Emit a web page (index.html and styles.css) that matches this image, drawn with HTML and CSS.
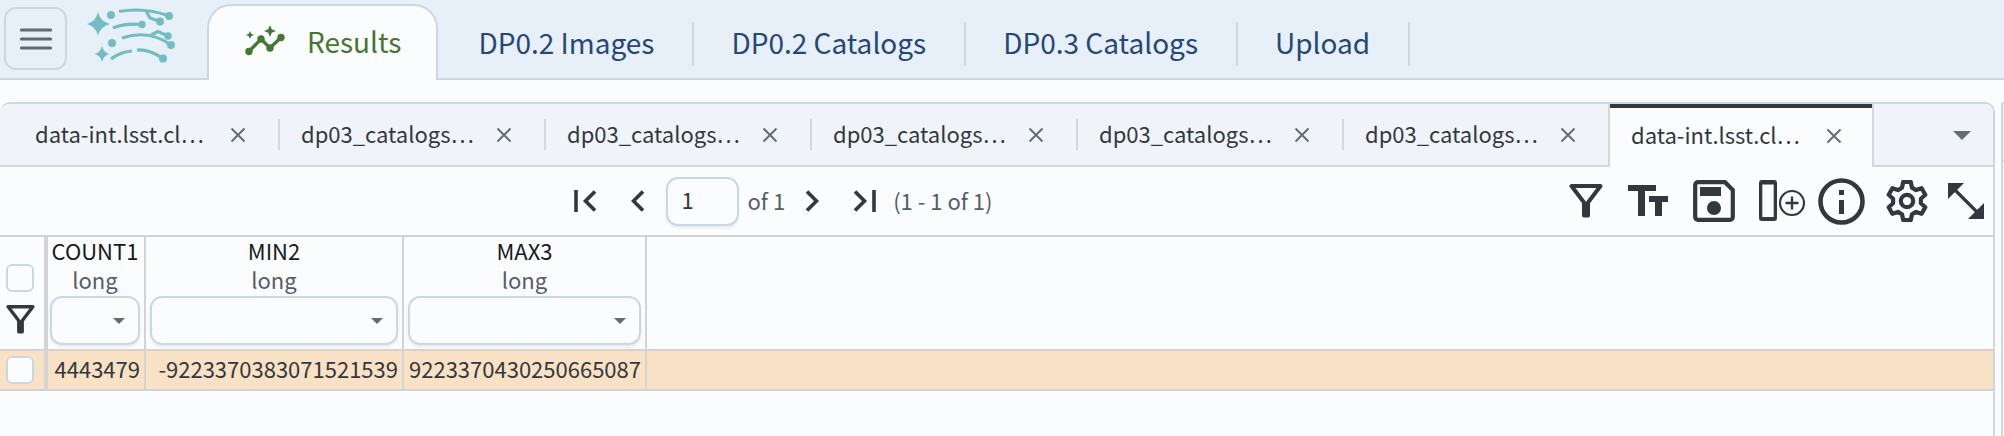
FILE: index.html
```html
<!DOCTYPE html>
<html lang="en">
<head>
  <meta charset="UTF-8">
  <title>Results</title>
  <link rel="stylesheet" href="styles.css">
</head>
<body>

  <svg class="defs" aria-hidden="true">
    <symbol id="close" viewBox="0 0 16 16">
      <path d="M1.5 1.5l13 13M14.5 1.5l-13 13" fill="none" stroke="currentColor" stroke-width="2"/>
    </symbol>
    <symbol id="filter" viewBox="0 0 34 34">
      <path d="M2.500 2H31.500L19 18.500V31.500H15V18.500Z" fill="none" stroke="currentColor" stroke-width="4" stroke-linejoin="round"/>
    </symbol>
    <symbol id="caret" viewBox="0 0 18 9">
      <path d="M0 0H18L9 9Z" fill="currentColor"/>
    </symbol>
  </svg>

  <header class="banner">
    <button class="menu-btn" type="button" aria-label="Menu">
      <svg width="32" height="22" viewBox="0 0 32 22"><path d="M1.500 2h29M1.500 11h29M1.500 20h29" stroke="currentColor" stroke-width="3.200" stroke-linecap="round"/></svg>
    </button>
    <svg class="logo" width="90" height="58" viewBox="0 0 90 58">
      <g fill="currentColor">
        <path d="M11 5Q13 14.500 23 17Q13 19.500 11 29Q9 19.500 0 17Q9 14.500 11 5Z"/>
        <path d="M15 39Q16.500 45.500 22.500 47Q16.500 48.500 15 55Q13.500 48.500 7.500 47Q13.500 45.500 15 39Z"/>
        <circle cx="24" cy="8" r="4"/><circle cx="25" cy="36" r="4"/>
        <circle cx="82" cy="9" r="4"/><circle cx="73" cy="14.500" r="4"/>
        <circle cx="55" cy="17.500" r="3.700"/><circle cx="81" cy="29" r="3.700"/>
        <circle cx="84" cy="38" r="4"/><circle cx="76" cy="51.500" r="4"/>
      </g>
      <g fill="none" stroke="currentColor" stroke-width="3.200">
        <path d="M32 4.500Q58 0 82 9M59 4L63 11L73 14.500"/>
        <path d="M26 21Q38 16 55 17.500"/>
        <path d="M35 31Q62 22 84 38M64 28L71 24.500L81 29"/>
        <path d="M24 52Q33 45 45 44M50 43Q62 42 76 51.500"/>
      </g>
    </svg>
    <nav class="main-tabs">
      <a class="main-tab active" href="#results">
        <svg width="40" height="32" viewBox="0 0 40 32">
          <path d="M4 26.500L16 14L25 23L36 12.500" fill="none" stroke="currentColor" stroke-width="3.300"/>
          <g fill="currentColor">
            <circle cx="4" cy="26.500" r="3.700"/><circle cx="16" cy="14" r="3.700"/>
            <circle cx="25" cy="23" r="3.700"/><circle cx="36" cy="12.500" r="3.700"/>
            <path d="M25 0L26.800 4.200L31 6L26.800 7.800L25 12L23.200 7.800L19 6L23.200 4.200Z"/>
            <path d="M5 6L6.200 8.800L9 10L6.200 11.200L5 14L3.800 11.200L1 10L3.800 8.800Z"/>
          </g>
        </svg>
        <span>Results</span>
      </a>
      <a class="main-tab" href="#images">DP0.2 Images</a>
      <a class="main-tab" href="#dp02">DP0.2 Catalogs</a>
      <a class="main-tab" href="#dp03">DP0.3 Catalogs</a>
      <a class="main-tab" href="#upload">Upload</a>
    </nav>
  </header>

  <main class="workspace">
    <section class="panel">
      <div class="tab-bar">
        <div class="tab"><a href="#t1">data-int.lsst.cl…</a><button type="button" aria-label="Close tab"><svg width="16" height="16"><use href="#close"/></svg></button></div>
        <div class="tab"><a href="#t2">dp03_catalogs…</a><button type="button" aria-label="Close tab"><svg width="16" height="16"><use href="#close"/></svg></button></div>
        <div class="tab"><a href="#t3">dp03_catalogs…</a><button type="button" aria-label="Close tab"><svg width="16" height="16"><use href="#close"/></svg></button></div>
        <div class="tab"><a href="#t4">dp03_catalogs…</a><button type="button" aria-label="Close tab"><svg width="16" height="16"><use href="#close"/></svg></button></div>
        <div class="tab"><a href="#t5">dp03_catalogs…</a><button type="button" aria-label="Close tab"><svg width="16" height="16"><use href="#close"/></svg></button></div>
        <div class="tab"><a href="#t6">dp03_catalogs…</a><button type="button" aria-label="Close tab"><svg width="16" height="16"><use href="#close"/></svg></button></div>
        <div class="tab active"><a href="#t7">data-int.lsst.cl…</a><button type="button" aria-label="Close tab"><svg width="16" height="16"><use href="#close"/></svg></button></div>
        <button class="more-tabs" type="button" aria-label="All tabs"><svg width="18" height="9"><use href="#caret"/></svg></button>
      </div>

      <div class="toolbar">
        <div class="paging">
          <button type="button" aria-label="First page"><svg width="24" height="22" viewBox="0 0 24 22"><path d="M3 0V22M22 1.500L12.500 11L22 20.500" fill="none" stroke="currentColor" stroke-width="3.600"/></svg></button>
          <button type="button" aria-label="Previous page"><svg width="14" height="22" viewBox="0 0 14 22"><path d="M12 1.500L2.500 11L12 20.500" fill="none" stroke="currentColor" stroke-width="3.600"/></svg></button>
          <label class="page">
            <input type="text" value="1" aria-label="Page">
            <span>of 1</span>
          </label>
          <button type="button" aria-label="Next page"><svg width="14" height="22" viewBox="0 0 14 22"><path d="M2 1.500L11.500 11L2 20.500" fill="none" stroke="currentColor" stroke-width="3.600"/></svg></button>
          <button type="button" aria-label="Last page"><svg width="24" height="22" viewBox="0 0 24 22"><path d="M21 0V22M2 1.500L11.500 11L2 20.500" fill="none" stroke="currentColor" stroke-width="3.600"/></svg></button>
          <span>(1 - 1 of 1)</span>
        </div>
        <div class="actions">
          <button type="button" aria-label="Filters"><svg width="34" height="34"><use href="#filter"/></svg></button>
          <button type="button" aria-label="Text view"><svg width="42" height="34" viewBox="0 0 42 34"><path d="M1 1H29V7H18V32H11V7H1ZM22 12H41V18H35V32H28V18H22Z" fill="currentColor"/></svg></button>
          <button type="button" aria-label="Save"><svg width="42" height="42" viewBox="0 0 42 42"><path d="M5 2.200H32L39.800 10V37A2.800 2.800 0 0 1 37 39.800H5A2.800 2.800 0 0 1 2.200 37V5A2.800 2.800 0 0 1 5 2.200Z" fill="none" stroke="currentColor" stroke-width="4.200"/><path d="M7 7H28V16H7Z" fill="currentColor"/><circle cx="21" cy="28" r="7" fill="currentColor"/></svg></button>
          <button type="button" aria-label="Add column"><svg width="46" height="42" viewBox="0 0 46 42"><path d="M3 0H15Q18 0 18 3V38Q18 41 15 41H3Q0 41 0 38V3Q0 0 3 0ZM3.300 4.500V37H14.700V4.500Z" fill="currentColor" fill-rule="evenodd"/><circle cx="33" cy="23" r="12" fill="none" stroke="currentColor" stroke-width="2.200"/><path d="M33 16.500V29.500M26.500 23H39.500" stroke="currentColor" stroke-width="2.400"/></svg></button>
          <button type="button" aria-label="Info"><svg width="47" height="47" viewBox="0 0 47 47"><circle cx="23.500" cy="23.500" r="21" fill="none" stroke="currentColor" stroke-width="4.600"/><path d="M21 12H26V17H21ZM21 22H26V36H21Z" fill="currentColor"/></svg></button>
          <button type="button" aria-label="Settings"><svg width="42" height="42" viewBox="-21 -21 42 42"><g fill="none" stroke="currentColor" stroke-linejoin="round"><path stroke-width="4.200" d="M-3.800 -19H3.800L5 -13.200L9 -10.900L14.600 -12.800L18.300 -6.200L13.900 -2.300V2.300L18.300 6.200L14.600 12.800L9 10.900L5 13.200L3.800 19H-3.800L-5 13.200L-9 10.900L-14.600 12.800L-18.300 6.200L-13.900 2.300V-2.300L-18.300 -6.200L-14.600 -12.800L-9 -10.900L-5 -13.200Z"/><circle r="6.200" stroke-width="4.200"/></g></svg></button>
          <button type="button" aria-label="Expand"><svg width="36" height="36" viewBox="0 0 36 36"><path d="M7 7L29 29" stroke="currentColor" stroke-width="3.200"/><path d="M0 0H16L0 16ZM36 36H20L36 20Z" fill="currentColor"/></svg></button>
        </div>
      </div>

      <table class="results">
        <colgroup>
          <col class="col-check"><col class="col-count"><col class="col-min"><col class="col-max"><col>
        </colgroup>
        <thead>
          <tr>
            <th class="check">
              <div class="check-head">
                <input type="checkbox" aria-label="Select all rows">
                <button type="button" aria-label="Filter selected"><svg width="29" height="29"><use href="#filter"/></svg></button>
              </div>
            </th>
            <th>
              <div class="name">COUNT1</div>
              <div class="type">long</div>
              <div class="field"><input type="text" aria-label="Filter COUNT1"><button type="button" aria-label="Options"><svg width="12" height="6"><use href="#caret"/></svg></button></div>
            </th>
            <th>
              <div class="name">MIN2</div>
              <div class="type">long</div>
              <div class="field"><input type="text" aria-label="Filter MIN2"><button type="button" aria-label="Options"><svg width="12" height="6"><use href="#caret"/></svg></button></div>
            </th>
            <th>
              <div class="name">MAX3</div>
              <div class="type">long</div>
              <div class="field"><input type="text" aria-label="Filter MAX3"><button type="button" aria-label="Options"><svg width="12" height="6"><use href="#caret"/></svg></button></div>
            </th>
            <td></td>
          </tr>
        </thead>
        <tbody>
          <tr>
            <td class="check"><input type="checkbox" aria-label="Select row"></td>
            <td>4443479</td>
            <td>-9223370383071521539</td>
            <td>9223370430250665087</td>
            <td></td>
          </tr>
        </tbody>
      </table>
    </section>
    <aside class="next-panel"><div class="next-bar"></div></aside>
  </main>

</body>
</html>
```
FILE: styles.css
```css
* {
  box-sizing: border-box;
}

body {
  margin: 0;
  min-height: 100vh;
  display: flex;
  flex-direction: column;
  overflow: hidden;
  background: #fbfcfe;
  color: #32383e;
  font-family: "Noto Sans CJK JP", "Source Sans 3", sans-serif;
  font-size: 22px;
  line-height: 30px;
}

a {
  color: inherit;
  text-decoration: none;
}

button {
  display: flex;
  align-items: center;
  justify-content: center;
  padding: 0;
  border: 0;
  background: none;
  color: inherit;
}

input {
  margin: 0;
  font: inherit;
  color: inherit;
}

svg {
  display: block;
  flex: none;
}

.defs {
  position: absolute;
  width: 0;
  height: 0;
}

/* top banner */

.banner {
  display: flex;
  height: 80px;
  padding-left: 4px;
  background: #e7eff8;
  border-bottom: 2px solid #cdd7e1;
}

.menu-btn {
  width: 63px;
  height: 63px;
  margin-top: 7px;
  border: 2px solid #cdd7e1;
  border-radius: 12px;
  color: #636b74;
}

.logo {
  margin: 7px 30px 0 20px;
  color: #73bdc2;
}

.main-tabs {
  display: flex;
  align-items: flex-end;
  height: 80px;
  color: #264777;
  font-size: 28px;
}

.main-tab {
  display: flex;
  align-items: center;
  height: 44px;
  margin-bottom: 14px;
  padding: 0 38px 4px 37px;
  border-right: 2px solid #cdd7e1;
}

.main-tab.active {
  gap: 22px;
  height: 76px;
  margin: 0 3px 0 0;
  padding: 0 35px 4px 36px;
  border: 2px solid #cdd7e1;
  border-bottom: 0;
  border-radius: 24px 24px 0 0;
  background: #fbfcfe;
  color: #467730;
}

/* panels */

.workspace {
  flex: 1;
  display: flex;
  gap: 6px;
  padding-top: 22px;
}

.panel {
  flex: 1;
  border: solid #cdd7e1;
  border-width: 2px 2px 0 0;
  border-radius: 10px 10px 0 0;
  overflow: hidden;
}

.next-panel {
  width: 3px;
  border: solid #cdd7e1;
  border-width: 2px 0 0 2px;
  border-radius: 10px 0 0 0;
}

.next-bar {
  height: 58px;
  background: #f0f4f8;
  border-bottom: 2px solid #d3d6dc;
}

.tab-bar {
  display: flex;
  align-items: center;
  height: 63px;
  padding-left: 14px;
  background: #f0f4f8;
  box-shadow: inset 0 -2px #d4d6dc;
}

.tab {
  display: flex;
  align-items: center;
  justify-content: space-between;
  width: 266px;
  height: 31px;
  margin-bottom: 2px;
  padding: 0 32px 0 21px;
  border-right: 2px solid #d4d6dc;
}

.tab a {
  padding-bottom: 4px;
}

.tab button {
  color: #636b74;
}

.tab:nth-child(6) {
  width: 264px;
  border-right: 0;
}

.tab.active {
  height: 63px;
  margin-bottom: 0;
  padding-right: 30px;
  border: solid #d4d6dc;
  border-width: 0 2px;
  box-shadow: inset 0 4px #32383e;
  background: #fbfcfe;
}

.more-tabs {
  margin: 0 22px 0 auto;
  color: #636b74;
}

/* toolbar */

.toolbar {
  display: flex;
  align-items: center;
  height: 70px;
  padding-right: 9px;
  border-bottom: 2px solid #d0d3d5;
}

.paging {
  flex: 1;
  display: flex;
  align-items: center;
  justify-content: center;
  padding-right: 4px;
  color: #555e68;
}

.paging span {
  padding-bottom: 2px;
}

.page {
  display: flex;
  align-items: center;
  gap: 9px;
}

.page input {
  width: 73px;
  height: 49px;
  padding: 0 14px 4px;
  border: 2px solid #cdd7e1;
  border-radius: 12px;
  background: #fbfcfe;
  box-shadow: 0 2px 3px #15151514;
}

.paging button,
.page input,
.actions {
  color: #32383e;
}

.paging > button:nth-child(2) {
  margin: 0 21px 0 34px;
}

.paging > button:nth-child(4) {
  margin: 0 34px 0 20px;
}

.paging > span {
  margin-left: 16px;
}

.actions {
  display: flex;
  align-items: center;
  gap: 24px;
}

.actions button:nth-child(5) {
  margin: 0 -3px 0 -11px;
}

.actions button:last-child {
  margin-left: -4px;
}

/* table */

.results {
  width: 100%;
  table-layout: fixed;
  border-collapse: separate;
  border-spacing: 0;
}

.col-check { width: 48px; }
.col-count { width: 98px; }
.col-min { width: 258px; }
.col-max { width: 243px; }

.results th,
.results td {
  padding: 0 4px;
  border: solid #d3d3d3;
  border-width: 0 2px 2px 0;
  font-weight: normal;
  vertical-align: top;
}

.results th:nth-child(2) {
  padding: 0 4px 0 2px;
}

.results th.check,
.results td.check {
  padding: 0 0 0 6px;
  border-right-width: 4px;
}

.results th + td,
.results td:last-child {
  border-right: 0;
}

.name {
  color: #171a1c;
  line-height: 26px;
}

.type {
  color: #555e68;
  line-height: 32px;
}

.field {
  display: flex;
  align-items: center;
  height: 49px;
  margin: 1px 0 4px;
  padding-right: 13px;
  border: 2px solid #cdd7e1;
  border-radius: 12px;
  box-shadow: 0 2px 3px #15151514;
}

.field input {
  flex: 1;
  min-width: 0;
  border: 0;
  background: none;
}

.field button {
  color: #636b74;
}

.check-head {
  display: flex;
  flex-direction: column;
  gap: 13px;
  padding-top: 27px;
}

.results input[type="checkbox"] {
  display: block;
  appearance: none;
  width: 28px;
  height: 28px;
  border: 2px solid #cdd7e1;
  border-radius: 6px;
  background: #fbfcfe;
}

.check-head button {
  width: 29px;
}

.results tbody td {
  height: 40px;
  background: #f8e1c5;
  line-height: 34px;
  text-align: right;
}

.results tbody td.check {
  vertical-align: middle;
}
```
